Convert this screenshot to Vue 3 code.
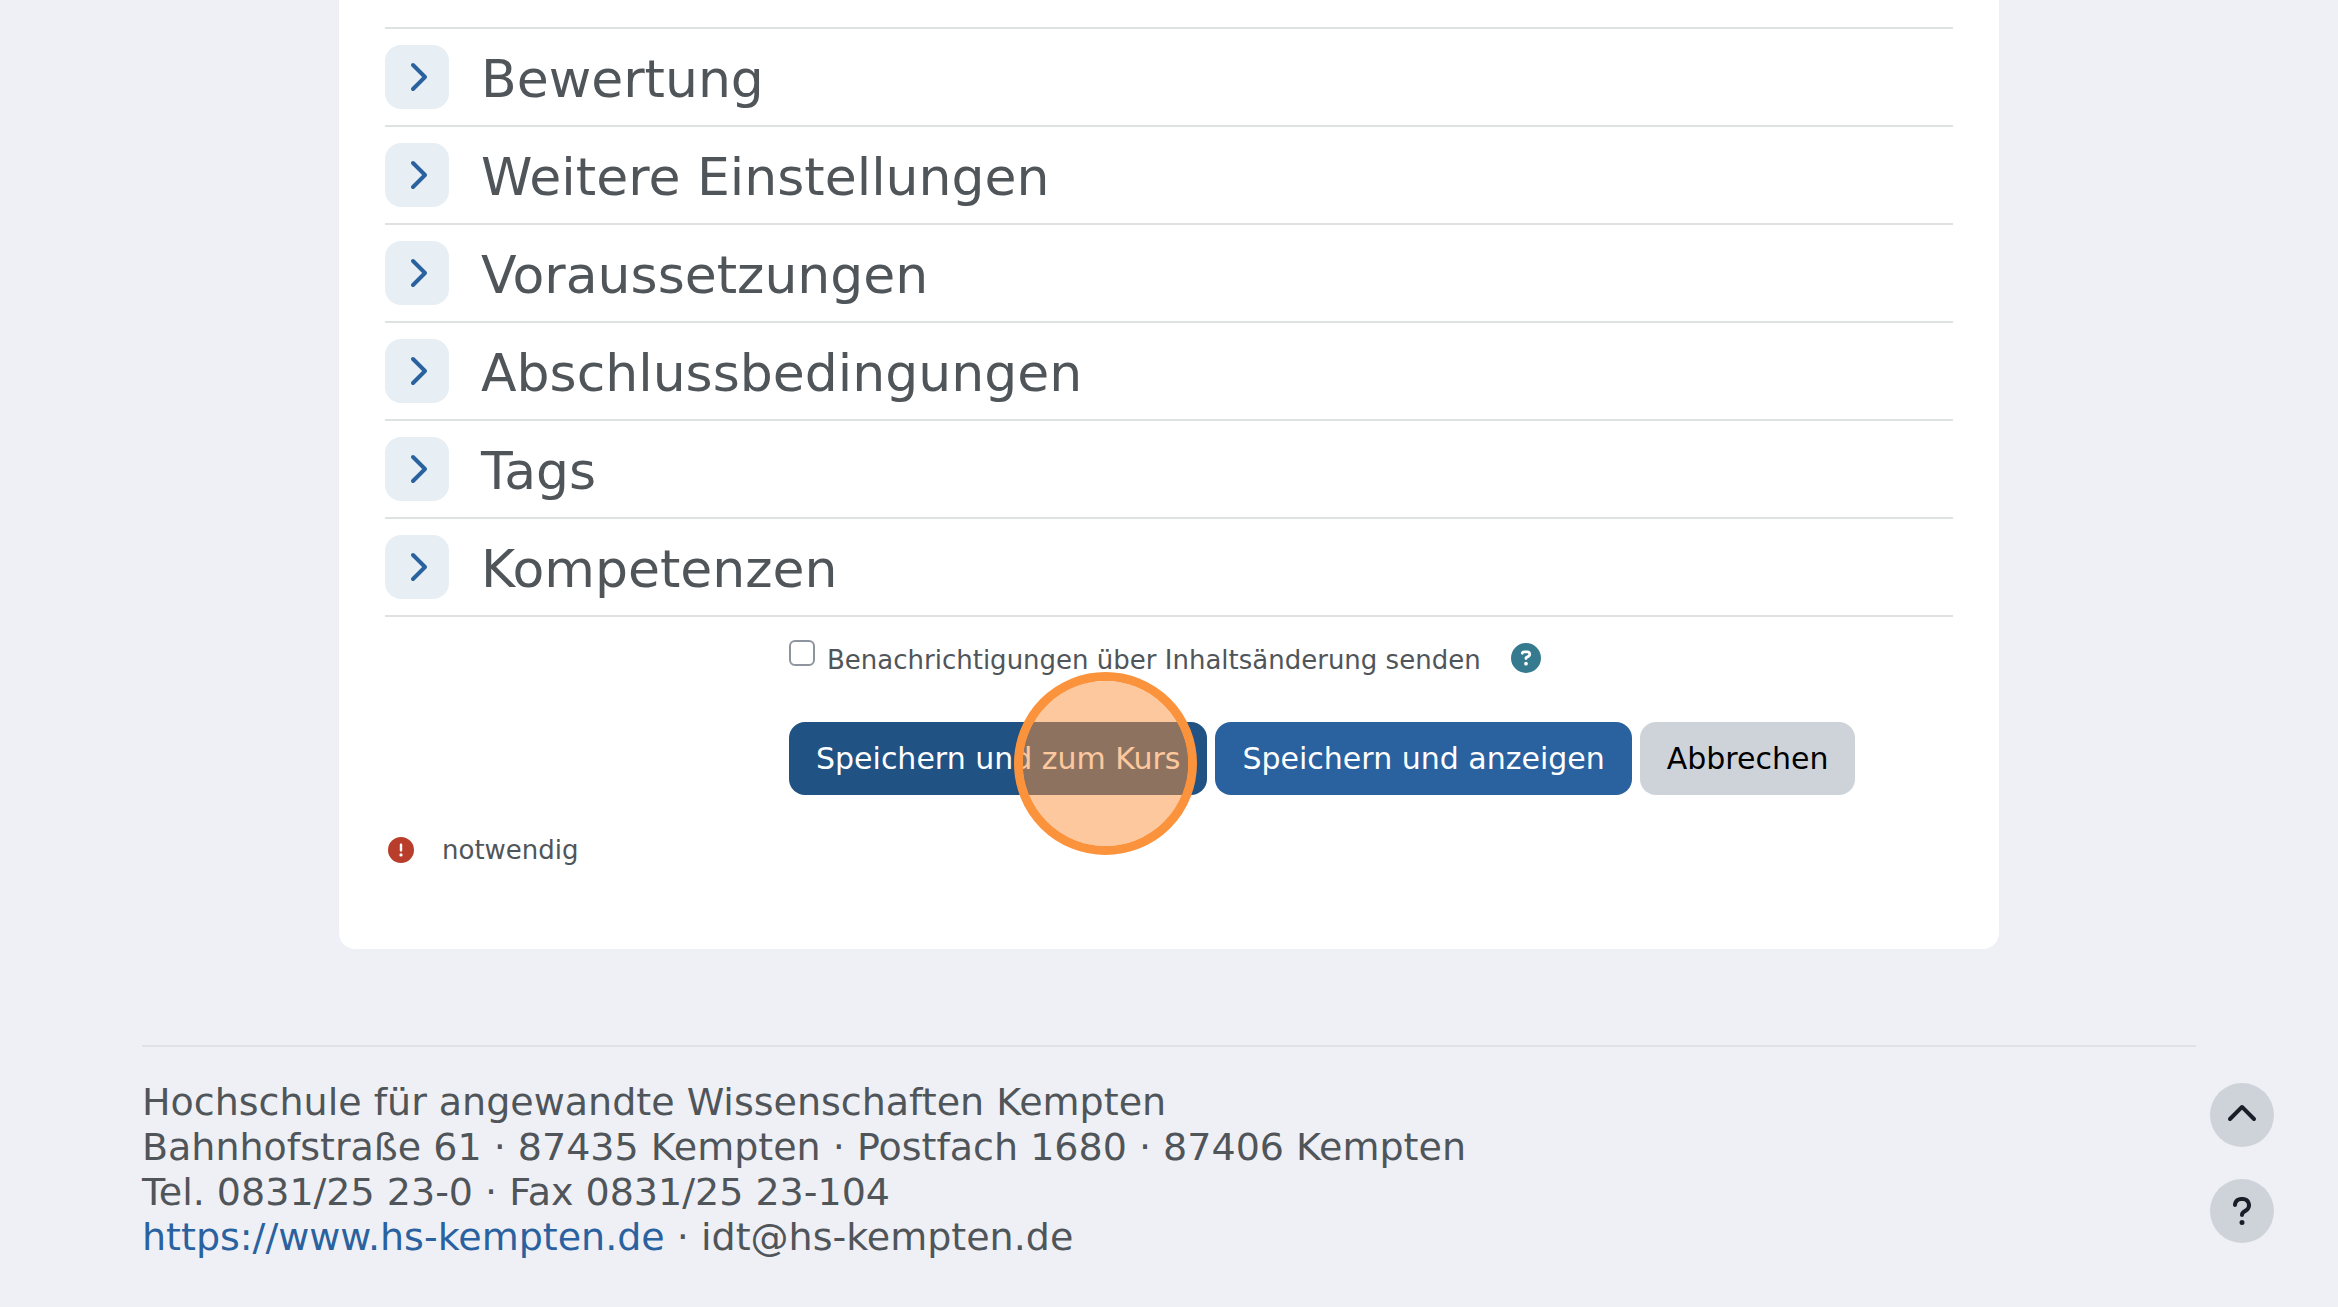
<script setup>
import { ref } from 'vue'

const sections = ref([
  { title: 'Bewertung', open: false },
  { title: 'Weitere Einstellungen', open: false },
  { title: 'Voraussetzungen', open: false },
  { title: 'Abschlussbedingungen', open: false },
  { title: 'Tags', open: false },
  { title: 'Kompetenzen', open: false },
])
const notify = ref(false)
</script>

<template>
  <div class="page">
    <main class="card">
      <form @submit.prevent>
        <section v-for="section in sections" :key="section.title" class="section">
          <button
            type="button"
            class="toggle"
            :aria-label="section.title"
            :aria-expanded="section.open"
            @click="section.open = !section.open"
          >
            <svg class="toggle-icon" viewBox="0 0 320 512" aria-hidden="true">
              <path d="M310.6 233.4c12.5 12.5 12.5 32.8 0 45.3l-192 192c-12.5 12.5-32.8 12.5-45.3 0s-12.5-32.8 0-45.3L242.7 256 73.4 86.6c-12.5-12.5-12.5-32.8 0-45.3s32.8-12.5 45.3 0l192 192z" />
            </svg>
          </button>
          <h3>{{ section.title }}</h3>
        </section>

        <div class="fields">
          <div class="notify">
            <input id="notify" v-model="notify" type="checkbox" />
            <label for="notify">Benachrichtigungen über Inhaltsänderung senden</label>
            <button type="button" class="help" aria-label="Hilfe">
              <svg viewBox="0 0 512 512" aria-hidden="true">
                <path d="M256 512A256 256 0 1 0 256 0a256 256 0 1 0 0 512zM169.8 165.3c7.9-22.3 29.1-37.3 52.8-37.3h58.3c34.9 0 63.1 28.3 63.1 63.1c0 22.6-12.1 43.5-31.7 54.8L280 264.4c-.2 13-10.9 23.6-24 23.6c-13.3 0-24-10.7-24-24V250.5c0-8.6 4.6-16.5 12.1-20.8l44.3-25.4c4.7-2.7 7.6-7.7 7.6-13.1c0-8.4-6.8-15.1-15.1-15.1H222.6c-3.4 0-6.4 2.1-7.5 5.3l-.4 1.2c-4.4 12.5-18.2 19-30.6 14.6s-19-18.2-14.6-30.6l.4-1.2zM224 352a32 32 0 1 1 64 0 32 32 0 1 1 -64 0z" />
              </svg>
            </button>
          </div>
          <div class="actions">
            <button type="submit" class="btn btn-active">Speichern und zum Kurs</button>
            <button type="submit" class="btn btn-primary">Speichern und anzeigen</button>
            <button type="button" class="btn btn-secondary">Abbrechen</button>
            <span class="click-marker" aria-hidden="true"></span>
          </div>
        </div>

        <p class="required">
          <svg viewBox="0 0 512 512" aria-hidden="true">
            <path d="M256 512A256 256 0 1 0 256 0a256 256 0 1 0 0 512zm0-384c13.3 0 24 10.7 24 24V264c0 13.3-10.7 24-24 24s-24-10.7-24-24V152c0-13.3 10.7-24 24-24zM224 352a32 32 0 1 1 64 0 32 32 0 1 1 -64 0z" />
          </svg>
          <span>notwendig</span>
        </p>
      </form>
    </main>

    <footer class="footer">
      <address>
        Hochschule für angewandte Wissenschaften Kempten<br />
        Bahnhofstraße 61 · 87435 Kempten · Postfach 1680 · 87406 Kempten<br />
        Tel. 0831/25 23-0 · Fax 0831/25 23-104<br />
        <a href="https://www.hs-kempten.de">https://www.hs-kempten.de</a> · idt@hs-kempten.de
      </address>
    </footer>

    <div class="floating">
      <button type="button" aria-label="Nach oben">
        <svg viewBox="0 0 512 512" aria-hidden="true">
          <path d="M233.4 105.4c12.5-12.5 32.8-12.5 45.3 0l192 192c12.5 12.5 12.5 32.8 0 45.3s-32.8 12.5-45.3 0L256 173.3 86.6 342.6c-12.5 12.5-32.8 12.5-45.3 0s-12.5-32.8 0-45.3l192-192z" />
        </svg>
      </button>
      <button type="button" aria-label="Hilfe anzeigen">
        <svg viewBox="0 0 320 512" aria-hidden="true">
          <path d="M80 160c0-35.3 28.7-64 64-64h32c35.3 0 64 28.7 64 64v3.6c0 21.8-11.1 42.1-29.4 53.8l-42.2 27.1c-25.2 16.2-40.4 44.1-40.4 74V320c0 17.7 14.3 32 32 32s32-14.3 32-32v-1.4c0-8.2 4.2-15.8 11-20.2l42.2-27.1c36.6-23.6 58.8-64.1 58.8-107.7V160c0-70.7-57.3-128-128-128H144C73.3 32 16 89.3 16 160c0 17.7 14.3 32 32 32s32-14.3 32-32zm80 320a40 40 0 1 0 0-80 40 40 0 1 0 0 80z" />
        </svg>
      </button>
    </div>
  </div>
</template>

<style>
body {
  background: #eff0f5;
}
</style>

<style scoped>
.page {
  color: #50555a;
  font-family: Verdana, "DejaVu Sans", sans-serif;
  font-size: 26px;
  line-height: 40px;
}

button {
  border: 0;
  padding: 0;
  font: inherit;
  cursor: pointer;
}

svg {
  display: block;
  fill: currentColor;
}

.card {
  box-sizing: border-box;
  max-width: 1660px;
  margin: 0 auto;
  padding: 27px 46px 79px;
  background: #fff;
  border-radius: 0 0 16px 16px;
}

.section {
  display: flex;
  align-items: center;
  gap: 32px;
  padding: 16px 0;
  border-top: 2px solid #dee2e3;
}

.section h3 {
  margin: 0;
  padding-top: 4px;
  font-size: 52px;
  font-weight: 400;
  line-height: 60px;
}

.toggle {
  display: flex;
  align-items: center;
  justify-content: center;
  width: 64px;
  height: 64px;
  border-radius: 16px;
  background: #e7eff5;
  color: #2a619f;
}

.toggle-icon {
  width: 20px;
  height: 32px;
}

.fields {
  padding: 23px 0 0 404px;
  border-top: 2px solid #dee2e3;
}

.notify {
  display: flex;
  align-items: flex-start;
}

.notify input {
  appearance: none;
  width: 26px;
  height: 26px;
  margin: 0 12px 0 0;
  border: 2px solid #8f959e;
  border-radius: 6px;
  background: #fff;
}

.notify input:checked {
  background: #2a619f;
}

.help {
  margin: 3px 0 0 30px;
  background: none;
  color: #357a8f;
}

.help svg {
  width: 30px;
  height: 30px;
}

.actions {
  position: relative;
  display: flex;
  gap: 8px;
  margin-top: 42px;
}

.btn {
  padding: 17px 27px 16px;
  border-radius: 16px;
  font-size: 30px;
  color: #fff;
}

.btn-active {
  background: #215284;
}

.btn-primary {
  background: #2a619f;
}

.btn-secondary {
  background: #ced3da;
  color: #000;
}

/* Highlights the click position on top of the first button */
.click-marker {
  position: absolute;
  top: -50px;
  left: 225px;
  box-sizing: border-box;
  width: 183px;
  height: 183px;
  border: 9px solid #fb923c;
  border-radius: 50%;
  background: rgba(251, 146, 60, 0.5);
  background-clip: padding-box;
  pointer-events: none;
}

.required {
  display: flex;
  align-items: center;
  gap: 28px;
  margin: 35px 0 0;
  padding-left: 3px;
}

.required svg {
  width: 26px;
  height: 26px;
  color: #b93d2b;
}

.footer {
  margin: 96px 142px 0;
  padding: 33px 0 47px;
  border-top: 2px solid #dee2e6;
}

.footer address {
  font-size: 38px;
  font-style: normal;
  line-height: 45px;
}

.footer a {
  color: #2a619f;
  text-decoration: none;
}

.floating {
  position: fixed;
  right: 64px;
  bottom: 64px;
  display: flex;
  flex-direction: column;
  gap: 32px;
}

.floating button {
  display: flex;
  align-items: center;
  justify-content: center;
  width: 64px;
  height: 64px;
  border-radius: 50%;
  background: #ced3da;
  color: #1a1e28;
}

.floating svg {
  height: 32px;
}
</style>
